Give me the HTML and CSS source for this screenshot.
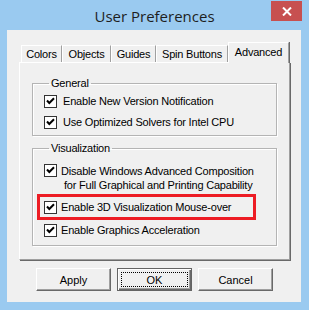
FILE: index.html
```html
<!DOCTYPE html>
<html lang="en">
<head>
    <meta charset="UTF-8">
    <title>User Preferences</title>
    <link rel="stylesheet" href="styles.css">
</head>
<body>
    <div class="window">
        <div class="titlebar">
            <span class="title">User Preferences</span>
            <button class="close" aria-label="Close">
                <svg width="10" height="9" viewBox="0 0 10 9"><path d="M1 0.5 L9 8.5 M9 0.5 L1 8.5" stroke="#fff" stroke-width="2" fill="none"/></svg>
            </button>
        </div>

        <div class="client">
            <div class="tabs">
                <div class="tab colors">Colors</div>
                <div class="tab objects">Objects</div>
                <div class="tab guides">Guides</div>
                <div class="tab spin">Spin Buttons</div>
                <div class="tab advanced active">Advanced</div>
            </div>

            <div class="panel">
                <fieldset class="group general">
                    <legend>General</legend>
                    <label class="row">
                        <svg class="check" width="13" height="13" viewBox="0 0 13 13"><rect x="0.5" y="0.5" width="12" height="12" fill="#fff" stroke="#333"/><path d="M3 5.5 L5.3 8 L10 3.2" stroke="#000" stroke-width="2" fill="none"/></svg>
                        <span>Enable New Version Notification</span>
                    </label>
                    <label class="row">
                        <svg class="check" width="13" height="13" viewBox="0 0 13 13"><rect x="0.5" y="0.5" width="12" height="12" fill="#fff" stroke="#333"/><path d="M3 5.5 L5.3 8 L10 3.2" stroke="#000" stroke-width="2" fill="none"/></svg>
                        <span>Use Optimized Solvers for Intel CPU</span>
                    </label>
                </fieldset>

                <fieldset class="group visual">
                    <legend>Visualization</legend>
                    <label class="row multi">
                        <svg class="check" width="13" height="13" viewBox="0 0 13 13"><rect x="0.5" y="0.5" width="12" height="12" fill="#fff" stroke="#333"/><path d="M3 5.5 L5.3 8 L10 3.2" stroke="#000" stroke-width="2" fill="none"/></svg>
                        <span>
                            <span class="line">Disable Windows Advanced Composition</span>
                            <span class="line second">for Full Graphical and Printing Capability</span>
                        </span>
                    </label>
                    <label class="row marked">
                        <svg class="check" width="13" height="13" viewBox="0 0 13 13"><rect x="0.5" y="0.5" width="12" height="12" fill="#fff" stroke="#333"/><path d="M3 5.5 L5.3 8 L10 3.2" stroke="#000" stroke-width="2" fill="none"/></svg>
                        <span>Enable 3D Visualization Mouse-over</span>
                    </label>
                    <label class="row">
                        <svg class="check" width="13" height="13" viewBox="0 0 13 13"><rect x="0.5" y="0.5" width="12" height="12" fill="#fff" stroke="#333"/><path d="M3 5.5 L5.3 8 L10 3.2" stroke="#000" stroke-width="2" fill="none"/></svg>
                        <span>Enable Graphics Acceleration</span>
                    </label>
                </fieldset>
            </div>

            <div class="buttons">
                <button class="btn">Apply</button>
                <button class="btn default">OK</button>
                <button class="btn">Cancel</button>
            </div>
        </div>
    </div>
</body>
</html>
```

FILE: styles.css
```css
/* Janela */
body {
    margin: 0;
    background-color: #9acaf0;
    font-family: "Liberation Sans", Arial, sans-serif;
    font-size: 11px;
    letter-spacing: -0.2px;
    color: #000;
    white-space: nowrap;
}

.window {
    width: 309px;
    height: 310px;
}

/* Barra de titulo */
.titlebar {
    height: 30px;
    display: grid;
    grid-template-columns: 1fr auto 1fr;
    align-items: start;
}

.title {
    grid-column: 2;
    font-family: "Open Sans", sans-serif;
    font-size: 15px;
    letter-spacing: 0;
    line-height: 20px;
    margin-top: 6px;
    color: #1e1e1e;
}

.close {
    grid-column: 3;
    justify-self: end;
    width: 31px;
    height: 20px;
    margin: 1px 7px 0 0;
    padding: 0;
    border: 0;
    background-color: #c75050;
    display: flex;
    align-items: center;
    justify-content: center;
}

/* Area cliente */
.client {
    height: 272px;
    margin: 0 8px 0 7px;
    padding: 12px 11px 0 12px;
    box-sizing: border-box;
    background-color: #f0f0f0;
    display: flex;
    flex-direction: column;
}

/* Abas */
.tabs {
    height: 20px;
    display: flex;
    align-items: flex-end;
    padding-left: 2px;
}

.tab {
    height: 17px;
    box-sizing: border-box;
    text-align: center;
    border-top: 1px solid #fff;
    border-left: 1px solid #fff;
    border-right: 1px solid #a0a0a0;
    line-height: 16px;
}

.tab.colors { width: 41px; }
.tab.objects { width: 49px; }
.tab.guides { width: 45px; }
.tab.spin { width: 72px; }
.tab.advanced { width: 61px; }

.tab.active {
    height: 21px;
    margin-bottom: -1px;
    position: relative;
    background-color: #f0f0f0;
    box-shadow: 1px 0 0 #696969;
    line-height: 18px;
}

.panel {
    height: 198px;
    box-sizing: border-box;
    padding: 13px 12px 0 12px;
    border: 1px solid;
    border-color: #fff #a0a0a0 #a0a0a0 #fff;
    box-shadow: 1px 1px 0 #696969;
}

/* Grupos */
.group {
    margin: 0;
    min-inline-size: 0;
    border: 1px solid #b4b4b4;
    box-shadow: inset 1px 1px 0 #fff, 1px 1px 0 #fff;
}

.group legend {
    margin-left: 5px;
    padding: 0 2px;
    line-height: 14px;
}

.general {
    padding: 4px 0 6px 11px;
}

.visual {
    margin-top: 5px;
    padding: 9px 0 8px 11px;
}

.row {
    display: flex;
    align-items: center;
    gap: 6px;
    line-height: 14px;
}

.general .row + .row {
    margin-top: 7px;
}

.visual .row {
    gap: 4px;
}

.row.multi {
    align-items: flex-start;
}

.line {
    display: block;
}

.line.second {
    padding-left: 3px;
}

.check {
    flex: none;
    display: block;
}

.row.marked {
    width: 219px;
    height: 26px;
    box-sizing: border-box;
    margin: 2px 0 3px -7px;
    padding-left: 4px;
    border: 3px solid #ed1c24;
}

/* Botoes */
.buttons {
    display: flex;
    justify-content: center;
    gap: 6px;
    margin-top: 8px;
}

.btn {
    width: 75px;
    height: 23px;
    padding: 0;
    font: inherit;
    color: #000;
    background-color: #f0f0f0;
    border: 1px solid;
    border-color: #fff #696969 #696969 #fff;
    box-shadow: inset -1px -1px 0 #a0a0a0;
}

.btn.default {
    border: 1px solid #646464;
    box-shadow: inset 1px 1px 0 #fff, inset -1px -1px 0 #696969, inset -2px -2px 0 #a0a0a0;
    outline: 1px dotted #000;
    outline-offset: -5px;
}
```
